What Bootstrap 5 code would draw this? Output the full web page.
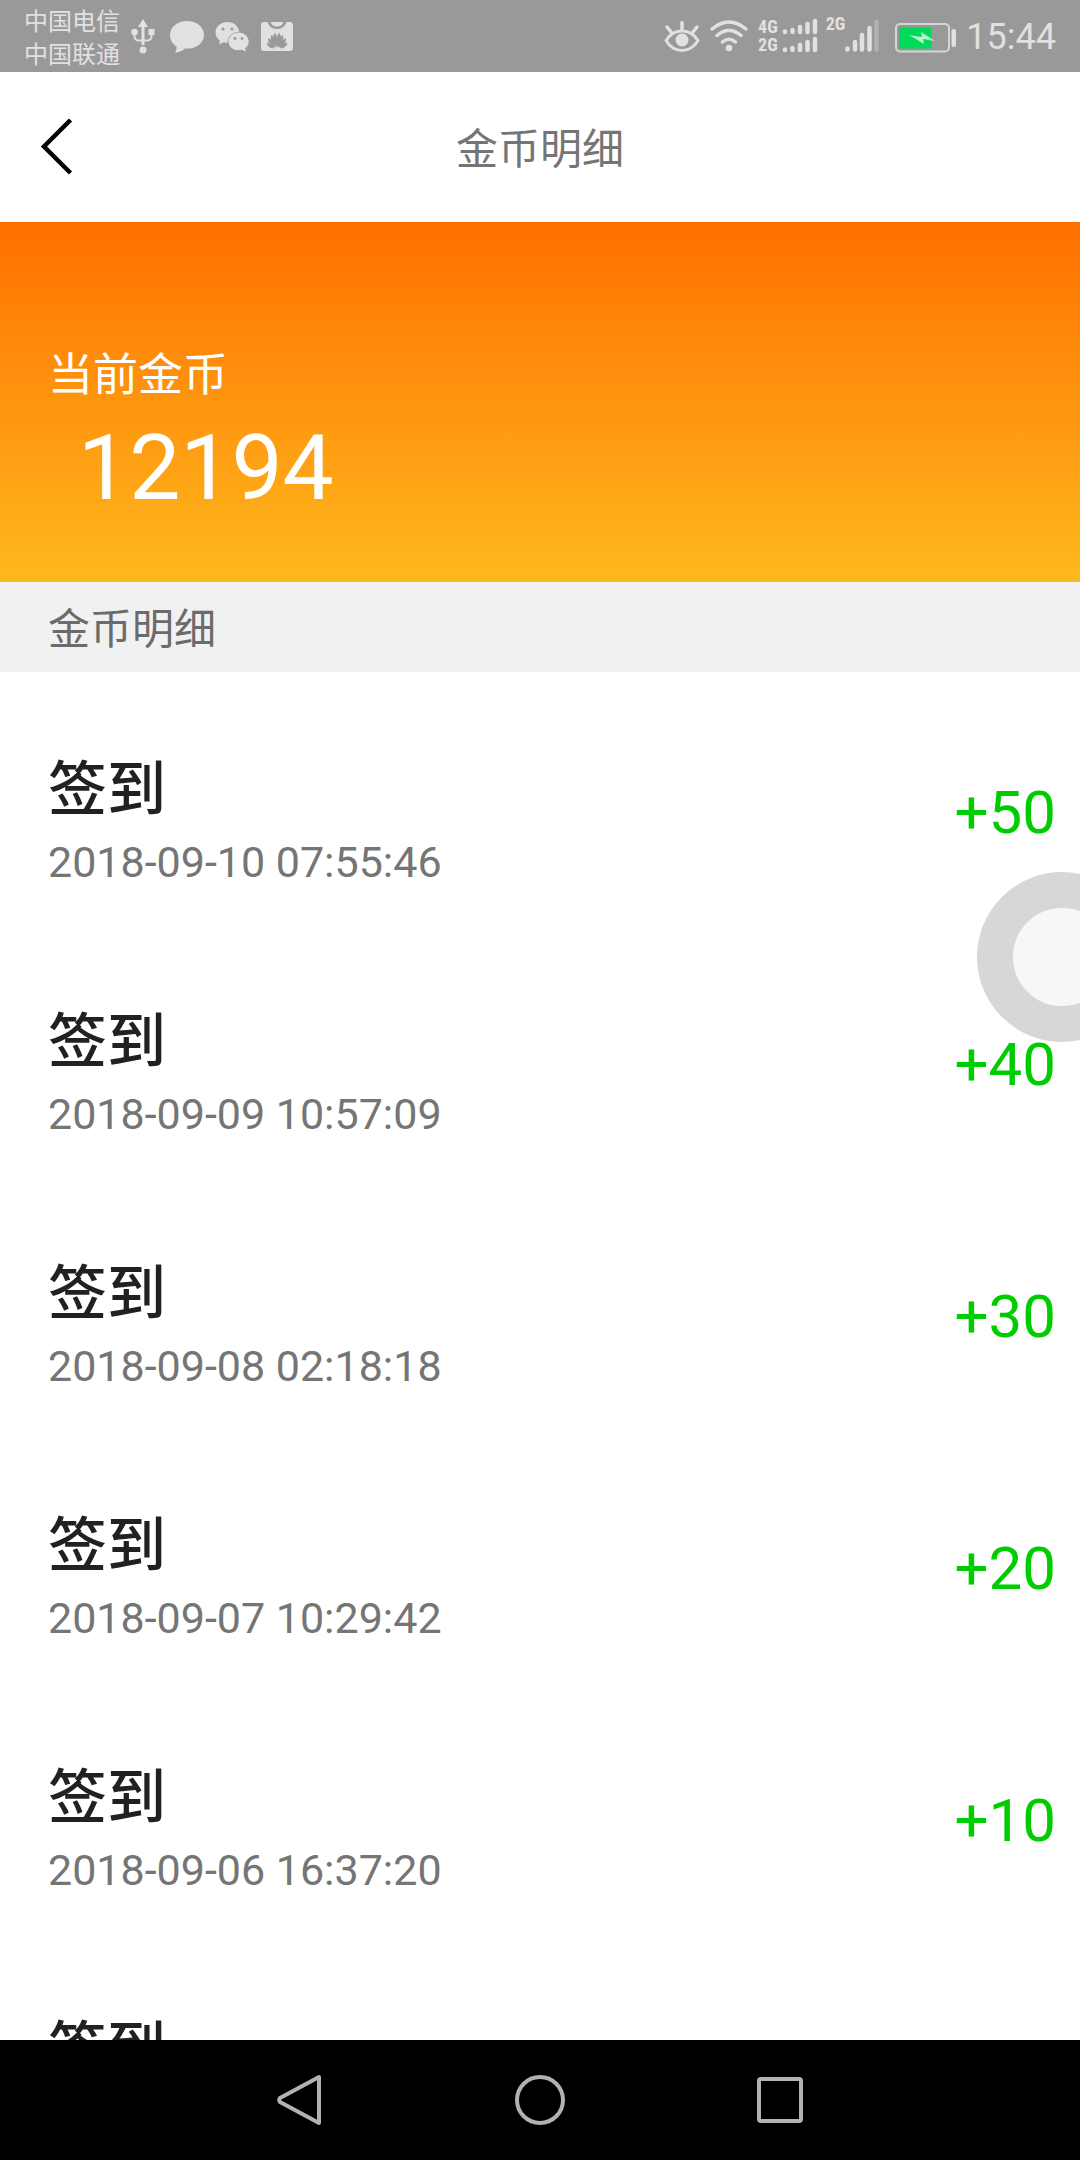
<!DOCTYPE html>
<html lang="zh-CN">
<head>
<meta charset="utf-8">
<meta name="viewport" content="width=device-width, initial-scale=1">
<title>金币明细</title>
<link href="https://cdn.jsdelivr.net/npm/bootstrap@5.3.0/dist/css/bootstrap.min.css" rel="stylesheet">
<style>
  body { font-family: Roboto, "Noto Sans CJK SC", sans-serif; background: #fff; color: #757575; }
  svg { display: block; flex: none; }
  .status-bar { height: 72px; padding: 0 24px; background: #999; color: #e1e1e1; }
  .carrier { font-size: 24px; line-height: 33px; padding-top: 5px; }
  .left-icons { gap: 10px; margin-left: 11px; }
  .net-label { font: bold 18px/18px "Roboto Condensed", "Liberation Sans Narrow", Roboto, sans-serif; }
  .clock { font-size: 36px; line-height: 48px; margin-left: 9px; padding-top: 2px; }
  .title-bar { height: 150px; }
  .title-bar h1 { font-size: 42px; line-height: 60px; font-weight: 400; padding-top: 6px; }
  .back-btn { left: 24px; width: 66px; height: 90px; }
  .balance { height: 360px; padding: 122px 48px 0; color: #fff; background: linear-gradient(#ff7000, #feb91e); }
  .balance-label { font-size: 45px; line-height: 64px; }
  .balance-value { font-size: 91px; line-height: 120px; padding-left: 30px; }
  .section-head { height: 90px; padding: 6px 48px 0; background: #f1f1f1; color: #6b6b6b; font-size: 42px; line-height: 60px; font-weight: 400; }
  .record { height: 252px; padding: 77px 24px 0 48px; }
  .record-title { font-size: 59px; line-height: 81px; font-weight: 500; color: #212121; }
  .record-time { font-size: 43px; line-height: 64px; }
  .record-amount { font-size: 60px; line-height: 128px; color: #00cd00; }
  .float-btn { top: 872px; right: -67px; width: 170px; height: 170px; border: 36px solid #d7d7d7; background: #f7f7f7; }
  .nav-keys { height: 120px; background: #000; gap: 140px; }
  .nav-keys button { width: 100px; height: 100px; }
</style>
<script src="https://cdn.jsdelivr.net/npm/bootstrap@5.3.0/dist/js/bootstrap.bundle.min.js"></script>
</head>
<body>
<div class="vh-100 d-flex flex-column position-relative overflow-hidden">

  <div class="status-bar d-flex align-items-center justify-content-between flex-shrink-0">
    <div class="d-flex align-items-center">
      <div class="carrier"><div>中国电信</div><div>中国联通</div></div>
      <div class="left-icons d-flex align-items-center">
        <svg width="24" height="36" viewBox="0 0 24 36" fill="#e1e1e1">
          <path d="M12 1l5 8h-3.500v18h-3V9H7z"/><circle cx="12" cy="32" r="3.500"/>
          <path d="M3.500 14v4q0 4 4 4.500h9q4-.5 4-4.500v-4" fill="none" stroke="#e1e1e1" stroke-width="2"/>
          <circle cx="3.500" cy="14" r="3.300"/><path d="M17.500 11h6v6h-6z"/>
        </svg>
        <svg class="ms-1" width="36" height="36" viewBox="0 0 36 36" fill="#e1e1e1">
          <path d="M18 3C8.500 3 1 9 1 17c0 5 2.500 9 6.500 11.500.5 2-.3 4-1.500 6 4 0 8-2 10-4 .7.100 1.300.1 2 .1 9.500 0 17-6 17-13.700S27.500 3 18 3z"/>
        </svg>
        <svg width="36" height="36" viewBox="0 0 36 36" fill="#e1e1e1">
          <path d="M12.500 4C6 4 .5 8.500.5 14.500c0 3.500 2 6.500 4.500 8l-1 4 4.500-2.300c1.500.4 2.800.5 4 .5 0-7 5.500-11 11.800-11C23.500 8 18.500 4 12.500 4z"/>
          <path d="M23.500 14.500c-5.500 0-10 4-10 9s4.500 8.800 10 8.800c1.200 0 2.500-.2 3.500-.5l4 2-1-3.500c2.300-1.700 3.700-4 3.700-6.800 0-5-4.700-9-10.200-9z"/>
          <g fill="#999"><circle cx="8" cy="11" r="1.500"/><circle cx="17" cy="11" r="1.500"/><circle cx="20" cy="20.500" r="1.400"/><circle cx="27" cy="20.500" r="1.400"/></g>
        </svg>
        <svg width="32" height="36" viewBox="0 0 32 36">
          <path d="M3 4h3.500c1.500 4.500 5 7 9.500 7s8-2.500 9.500-7H29q3 0 3 3v23q0 3-3 3H3q-3 0-3-3V7q0-3 3-3z" fill="#e1e1e1"/>
          <path d="M9.500 4h13c-1 3-3.500 4.500-6.500 4.500S10.500 7 9.500 4z" fill="#e1e1e1"/>
          <g fill="#999">
            <path d="M15.600 29.500c-3.500-5-4.500-12.500-1.600-14.500 2 1 2.600 8 1.600 14.500zM16.400 29.500c3.500-5 4.500-12.500 1.600-14.500-2 1-2.600 8-1.600 14.500z"/>
            <path d="M14.800 29.500c-4.300-3.500-6.300-9-4.300-12.500 2.300 1 4 7 4.300 12.500zM17.200 29.500c4.300-3.500 6.300-9 4.300-12.500-2.300 1-4 7-4.300 12.500z"/>
            <path d="M14 29.800c-4.500-1.800-7.500-6-6.800-9.800 2.600.8 5.500 5.500 6.800 9.800zM18 29.800c4.500-1.800 7.500-6 6.800-9.800-2.600.8-5.500 5.500-6.800 9.800z"/>
            <path d="M13.200 30.300c-3.700.4-7.200-2-7.700-5.800 2.800.2 6 3 7.700 5.800zM18.800 30.300c3.700.4 7.200-2 7.700-5.800-2.800.2-6 3-7.700 5.800z"/>
          </g>
        </svg>
      </div>
    </div>

    <div class="d-flex align-items-center">
      <svg width="36" height="36" viewBox="0 0 36 36" fill="none" stroke="#e1e1e1" stroke-width="3.500" stroke-linecap="round">
        <path d="M18 4.500v7M3 9l4 5M33 9l-4 5"/>
        <path d="M2 22.500C6 16 12 13 18 13s12 3 16 9.500C30 29 24 32.500 18 32.500S6 29 2 22.500z" stroke-width="3"/>
        <circle cx="18" cy="22" r="6.500" fill="#e1e1e1" stroke="none"/>
      </svg>
      <svg class="ms-2" width="42" height="36" viewBox="0 0 42 36" fill="none" stroke="#e1e1e1" stroke-width="3.500" stroke-linecap="round">
        <path d="M4 11Q21-3 38 11M9 17.500q12-10 24 0M14.500 24q6.500-5.500 13 0"/>
        <circle cx="21" cy="30" r="3.300" fill="#e1e1e1" stroke="none"/>
      </svg>
      <div class="net-label ms-2"><div>4G</div><div>2G</div></div>
      <svg class="ms-1" width="36" height="36" viewBox="0 0 36 36" stroke="#e1e1e1" stroke-width="4.500" stroke-linecap="round">
        <path d="M3 13.500v.5M10.500 12v2M18 9v5M25.500 6v8M33 3v11M3 31.500v.5M10.500 30v2M18 27v5M25.500 24v8M33 21v11"/>
      </svg>
      <div class="net-label align-self-start ms-2 mt-1">2G</div>
      <svg width="34" height="36" viewBox="0 0 34 36" stroke="#e1e1e1" stroke-width="4.500" stroke-linecap="round">
        <path d="M2.500 30.500v1M10 24v7.500M17 17v14.500M24.500 10v21.500"/><path d="M31.500 4v27.500" stroke="#b2b2b2"/>
      </svg>
      <svg class="ms-3 mt-1" width="62" height="32" viewBox="0 0 62 32">
        <rect x="1" y="2" width="53" height="27.500" rx="4" fill="none" stroke="#d5d5d5" stroke-width="2"/>
        <path d="M4 5.500h32.500v21H4z" fill="#00d95a"/>
        <path d="M14 13l13 2-1-5 14 9-12-2 1 5z" fill="#b5f3cf"/>
        <rect x="56.500" y="7" width="4.500" height="18" rx="2" fill="#e1e1e1"/>
      </svg>
      <div class="clock">15:44</div>
    </div>
  </div>

  <header class="title-bar position-relative d-flex align-items-center justify-content-center flex-shrink-0 bg-white">
    <button type="button" class="back-btn btn p-0 border-0 position-absolute" aria-label="返回">
      <svg width="66" height="60" viewBox="0 0 66 60" fill="none" stroke="#000" stroke-width="4.500"><path d="M46.500 3L20 29.500 46.500 56"/></svg>
    </button>
    <h1 class="mb-0">金币明细</h1>
  </header>

  <section class="balance flex-shrink-0">
    <div class="balance-label">当前金币</div>
    <div class="balance-value">12194</div>
  </section>

  <h2 class="section-head mb-0 d-flex align-items-center flex-shrink-0">金币明细</h2>

  <ul class="list-unstyled mb-0 flex-grow-1 overflow-hidden">
    <li class="record d-flex justify-content-between"><div><div class="record-title">签到</div><div class="record-time">2018-09-10 07:55:46</div></div><div class="record-amount">+50</div></li>
    <li class="record d-flex justify-content-between"><div><div class="record-title">签到</div><div class="record-time">2018-09-09 10:57:09</div></div><div class="record-amount">+40</div></li>
    <li class="record d-flex justify-content-between"><div><div class="record-title">签到</div><div class="record-time">2018-09-08 02:18:18</div></div><div class="record-amount">+30</div></li>
    <li class="record d-flex justify-content-between"><div><div class="record-title">签到</div><div class="record-time">2018-09-07 10:29:42</div></div><div class="record-amount">+20</div></li>
    <li class="record d-flex justify-content-between"><div><div class="record-title">签到</div><div class="record-time">2018-09-06 16:37:20</div></div><div class="record-amount">+10</div></li>
    <li class="record d-flex justify-content-between"><div><div class="record-title">签到</div></div></li>
  </ul>

  <button type="button" class="float-btn position-absolute rounded-circle p-0" aria-label="悬浮按钮"></button>

  <nav class="nav-keys d-flex align-items-center justify-content-center flex-shrink-0">
    <button type="button" class="btn p-0 border-0 d-flex align-items-center justify-content-center" aria-label="后退">
      <svg width="100" height="60" viewBox="0 0 100 60" fill="none" stroke="#b2b2b2" stroke-width="4" stroke-linejoin="round"><path d="M69 7v46L30 32q-1.500-2 0-4z"/></svg>
    </button>
    <button type="button" class="btn p-0 border-0 d-flex align-items-center justify-content-center" aria-label="主页">
      <svg width="60" height="60" viewBox="0 0 60 60" fill="none" stroke="#b2b2b2" stroke-width="4"><circle cx="30" cy="30" r="23"/></svg>
    </button>
    <button type="button" class="btn p-0 border-0 d-flex align-items-center justify-content-center" aria-label="最近任务">
      <svg width="60" height="60" viewBox="0 0 60 60" fill="none" stroke="#b2b2b2" stroke-width="4"><rect x="9" y="9" width="42" height="42" rx="2"/></svg>
    </button>
  </nav>
</div>
</body>
</html>
